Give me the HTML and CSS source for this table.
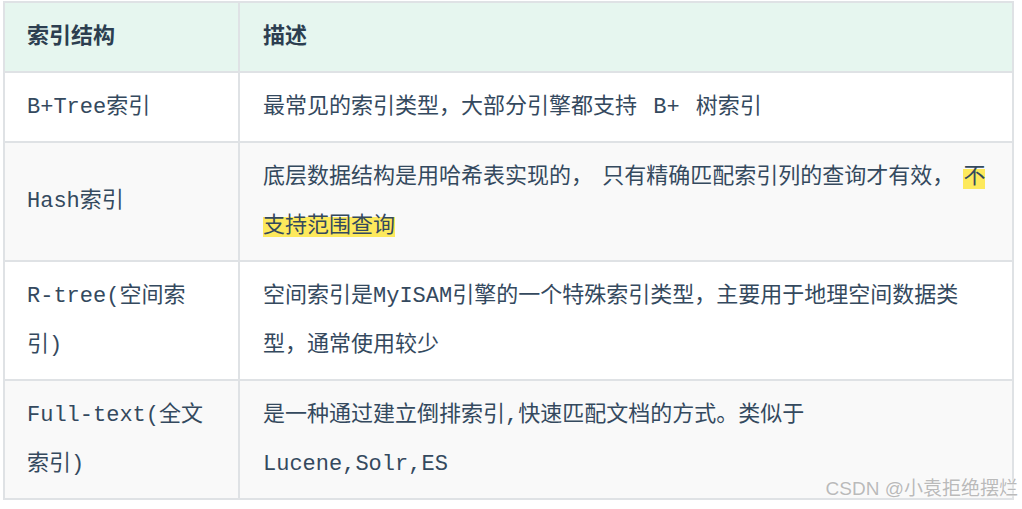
FILE: index.html
```html
<!DOCTYPE html>
<html lang="zh-CN">
<head>
<meta charset="utf-8">
<title>索引结构</title>
<link rel="stylesheet" href="styles.css">
</head>
<body>
<div class="page">
  <table class="idx-table">
    <colgroup>
      <col class="col-name">
      <col class="col-desc">
    </colgroup>
    <thead>
      <tr>
        <th class="cell-name">索引结构</th>
        <th class="cell-desc">描述</th>
      </tr>
    </thead>
    <tbody>
      <tr>
        <td class="cell-name">B+Tree索引</td>
        <td class="cell-desc">最常见的索引类型，大部分引擎都支持 <code class="code">B+</code> 树索引</td>
      </tr>
      <tr class="stripe">
        <td class="cell-name">Hash索引</td>
        <td class="cell-desc tight">底层数据结构是用哈希表实现的， 只有精确匹配索引列的查询才有效， <mark class="hl">不支持范围查询</mark></td>
      </tr>
      <tr>
        <td class="cell-name">R-tree(空间索引)</td>
        <td class="cell-desc">空间索引是MyISAM引擎的一个特殊索引类型，主要用于地理空间数据类型，通常使用较少</td>
      </tr>
      <tr class="stripe">
        <td class="cell-name">Full-text(全文索引)</td>
        <td class="cell-desc">是一种通过建立倒排索引,快速匹配文档的方式。类似于 Lucene,Solr,ES</td>
      </tr>
    </tbody>
  </table>
  <div class="watermark">CSDN @小袁拒绝摆烂</div>
</div>
</body>
</html>
```
FILE: styles.css
```css
html, body {
  margin: 0;
  padding: 0;
  background: #ffffff;
}

.page {
  position: relative;
  width: 1022px;
  height: 509px;
  padding: 1px 0 0 3px;
  box-sizing: border-box;
}

.idx-table {
  border-collapse: collapse;
  table-layout: fixed;
  width: 1011px;
  font-family: "Liberation Mono", "Noto Sans CJK SC", monospace;
  font-size: 22px;
  color: #34495e;
  border: 2px solid #dfe2e5;
}

.col-name {
  width: 235px;
}

.idx-table th,
.idx-table td {
  border: 2px solid #dfe2e5;
  line-height: 49px;
  padding: 9.5px 0;
  text-align: left;
  vertical-align: middle;
  word-break: normal;
}

.idx-table th {
  background: #e6f6ef;
  font-weight: bold;
  color: #2c3e50;
}

.cell-name {
  padding-left: 22px !important;
  padding-right: 22px !important;
}

.cell-desc {
  padding-left: 23px !important;
  padding-right: 23px !important;
}

.tight {
  word-spacing: -4px;
}

.code {
  font-family: inherit;
  font-size: inherit;
  padding: 0 3px;
}

.stripe td {
  background: #f9f9f9;
}

.hl {
  color: inherit;
  background: linear-gradient(to bottom, transparent 14%, #fde95c 14%, #fde95c 94%, transparent 94%);
}

.watermark {
  position: absolute;
  right: 4px;
  top: 478px;
  font-family: "Liberation Sans", "Noto Sans CJK SC", sans-serif;
  font-size: 19px;
  line-height: 22px;
  color: #bababa;
  text-shadow: 0 0 1px #ffffff, 0 0 2px #ffffff;
  white-space: nowrap;
}
```
